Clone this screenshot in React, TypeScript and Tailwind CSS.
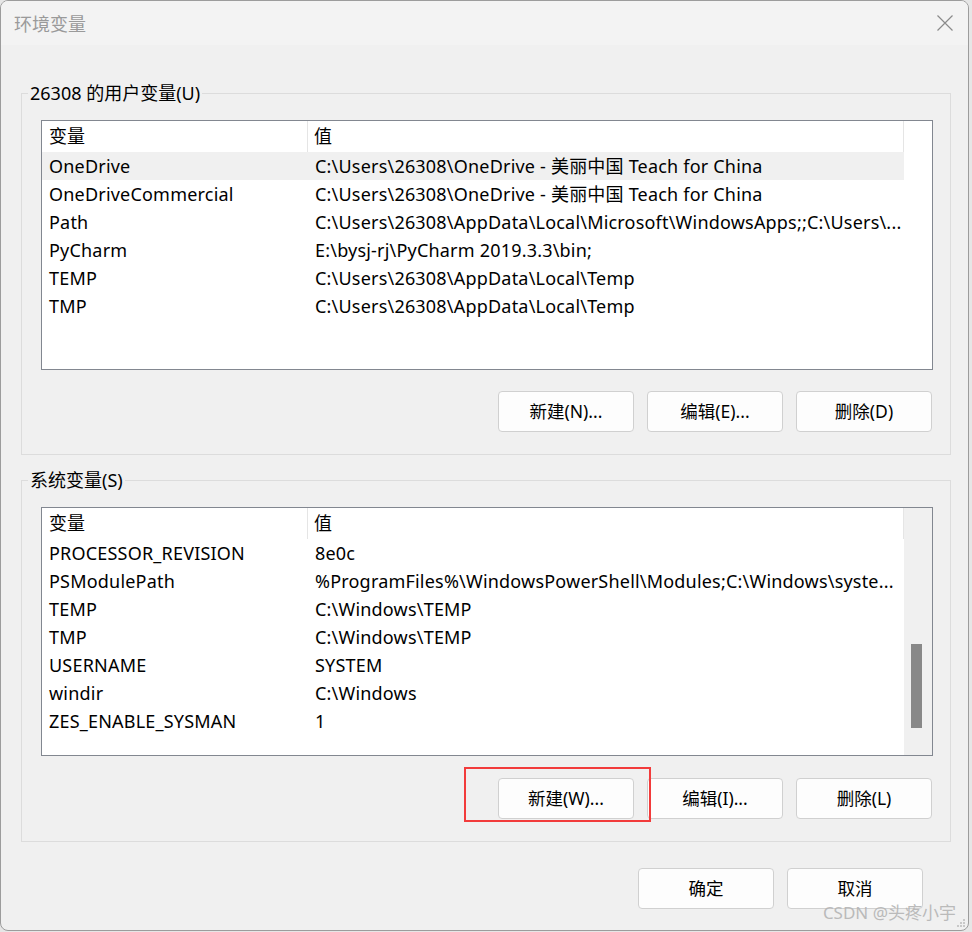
import React from "react";

const userVars: [string, string][] = [
  ["OneDrive", "C:\\Users\\26308\\OneDrive - 美丽中国 Teach for China"],
  ["OneDriveCommercial", "C:\\Users\\26308\\OneDrive - 美丽中国 Teach for China"],
  ["Path", "C:\\Users\\26308\\AppData\\Local\\Microsoft\\WindowsApps;;C:\\Users\\..."],
  ["PyCharm", "E:\\bysj-rj\\PyCharm 2019.3.3\\bin;"],
  ["TEMP", "C:\\Users\\26308\\AppData\\Local\\Temp"],
  ["TMP", "C:\\Users\\26308\\AppData\\Local\\Temp"],
];

const sysVars: [string, string][] = [
  ["PROCESSOR_REVISION", "8e0c"],
  ["PSModulePath", "%ProgramFiles%\\WindowsPowerShell\\Modules;C:\\Windows\\syste..."],
  ["TEMP", "C:\\Windows\\TEMP"],
  ["TMP", "C:\\Windows\\TEMP"],
  ["USERNAME", "SYSTEM"],
  ["windir", "C:\\Windows"],
  ["ZES_ENABLE_SYSMAN", "1"],
];

function Btn({ label }: { label: string }) {
  return (
    <button className="w-[136px] h-[41px] rounded-[4px] border border-[#d0d0d0] bg-[#fdfdfd] text-[17.5px] text-black flex items-center justify-center">
      {label}
    </button>
  );
}

function VarList({
  rows,
  selected,
  scroll,
  height,
}: {
  rows: [string, string][];
  selected?: number;
  scroll?: boolean;
  height: string;
}) {
  return (
    <div className={`ml-[19px] w-[892px] ${height} border border-[#828790] bg-white flex`}>
      <div className="w-[862px] flex flex-col">
        <div className="h-[31px] flex items-center text-[18px]">
          <div className="w-[266px] h-full pl-[7px] flex items-center border-r border-[#e5e5e5]">变量</div>
          <div className="flex-1 h-full pl-[6px] flex items-center border-r border-[#e5e5e5]">值</div>
        </div>
        {rows.map(([k, v], i) => (
          <div
            key={k + i}
            className={`h-[28px] flex items-center text-[18px] tracking-[0.2px] ${i === selected ? "bg-[#f0f0f0]" : ""}`}
          >
            <div className="w-[267px] pl-[7px] whitespace-nowrap overflow-hidden">{k}</div>
            <div className="flex-1 pl-[6px] pr-[2px] whitespace-nowrap overflow-hidden text-ellipsis">{v}</div>
          </div>
        ))}
      </div>
      {scroll ? (
        <div className="flex-1 bg-[#f0f0f0] flex flex-col pl-[7px] pt-[136px]">
          <div className="w-[11px] h-[84px] bg-[#888888]" />
        </div>
      ) : (
        <div className="flex-1" />
      )}
    </div>
  );
}

export default function App() {
  return (
    <div className="w-[972px] h-[932px] bg-[#e6e6e6] font-['Noto_Sans','Noto_Sans_CJK_SC',sans-serif] text-black relative">
      <div className="w-[969px] h-[931px] rounded-[8px] border border-[#9c9c9c] bg-[#f0f0f0] overflow-hidden flex flex-col relative">
        <div className="h-[44px] bg-[#f3f3f3] flex items-center justify-between pl-[13px] pr-[14px] shrink-0">
          <span className="text-[18px] text-[#9a9a9a] font-['Noto_Sans_CJK_SC',sans-serif]">环境变量</span>
          <svg width="18" height="18" viewBox="0 0 18 18">
            <path d="M1.5 1.5 L16.5 16.5 M16.5 1.5 L1.5 16.5" stroke="#8a8a8a" strokeWidth="1.2" fill="none" />
          </svg>
        </div>

        <div className="pl-[20px] flex flex-col">
          <fieldset className="mt-[36px] w-[930px] border border-[#dcdcdc] pb-[22px]">
            <legend className="ml-[6px] px-[2px] text-[18px] leading-[24px]">26308 的用户变量(U)</legend>
            <div className="mt-[15px]">
              <VarList rows={userVars} selected={0} height="h-[250px]" />
            </div>
            <div className="mt-[21px] flex justify-end gap-[13px] pr-[18px]">
              <Btn label="新建(N)..." />
              <Btn label="编辑(E)..." />
              <Btn label="删除(D)" />
            </div>
          </fieldset>

          <fieldset className="mt-[13px] w-[930px] border border-[#dcdcdc] pb-[22px]">
            <legend className="ml-[6px] px-[2px] text-[18px] leading-[24px]">系统变量(S)</legend>
            <div className="mt-[15px]">
              <VarList rows={sysVars} scroll height="h-[249px]" />
            </div>
            <div className="mt-[22px] flex justify-end gap-[13px] pr-[18px]">
              <div className="relative">
                <Btn label="新建(W)..." />
                <div className="absolute left-[-34px] top-[-11px] w-[187px] h-[55px] border-2 border-[#f23b3b] pointer-events-none" />
              </div>
              <Btn label="编辑(I)..." />
              <Btn label="删除(L)" />
            </div>
          </fieldset>

          <div className="mt-[26px] flex justify-end gap-[13px] pr-[46px] w-[948px]">
            <Btn label="确定" />
            <Btn label="取消" />
          </div>
        </div>

        <div className="absolute right-[12px] bottom-[5px] text-[17px] text-[#b4b4b4] opacity-90">
          CSDN @头疼小宇
        </div>
        <svg className="absolute right-[2px] bottom-[2px]" width="10" height="10" viewBox="0 0 10 10">
          <rect x="7" y="1" width="2" height="2" fill="#c8c8c8" />
          <rect x="4" y="4" width="2" height="2" fill="#c8c8c8" />
          <rect x="7" y="4" width="2" height="2" fill="#c8c8c8" />
          <rect x="1" y="7" width="2" height="2" fill="#c8c8c8" />
          <rect x="4" y="7" width="2" height="2" fill="#c8c8c8" />
          <rect x="7" y="7" width="2" height="2" fill="#c8c8c8" />
        </svg>
      </div>
    </div>
  );
}
